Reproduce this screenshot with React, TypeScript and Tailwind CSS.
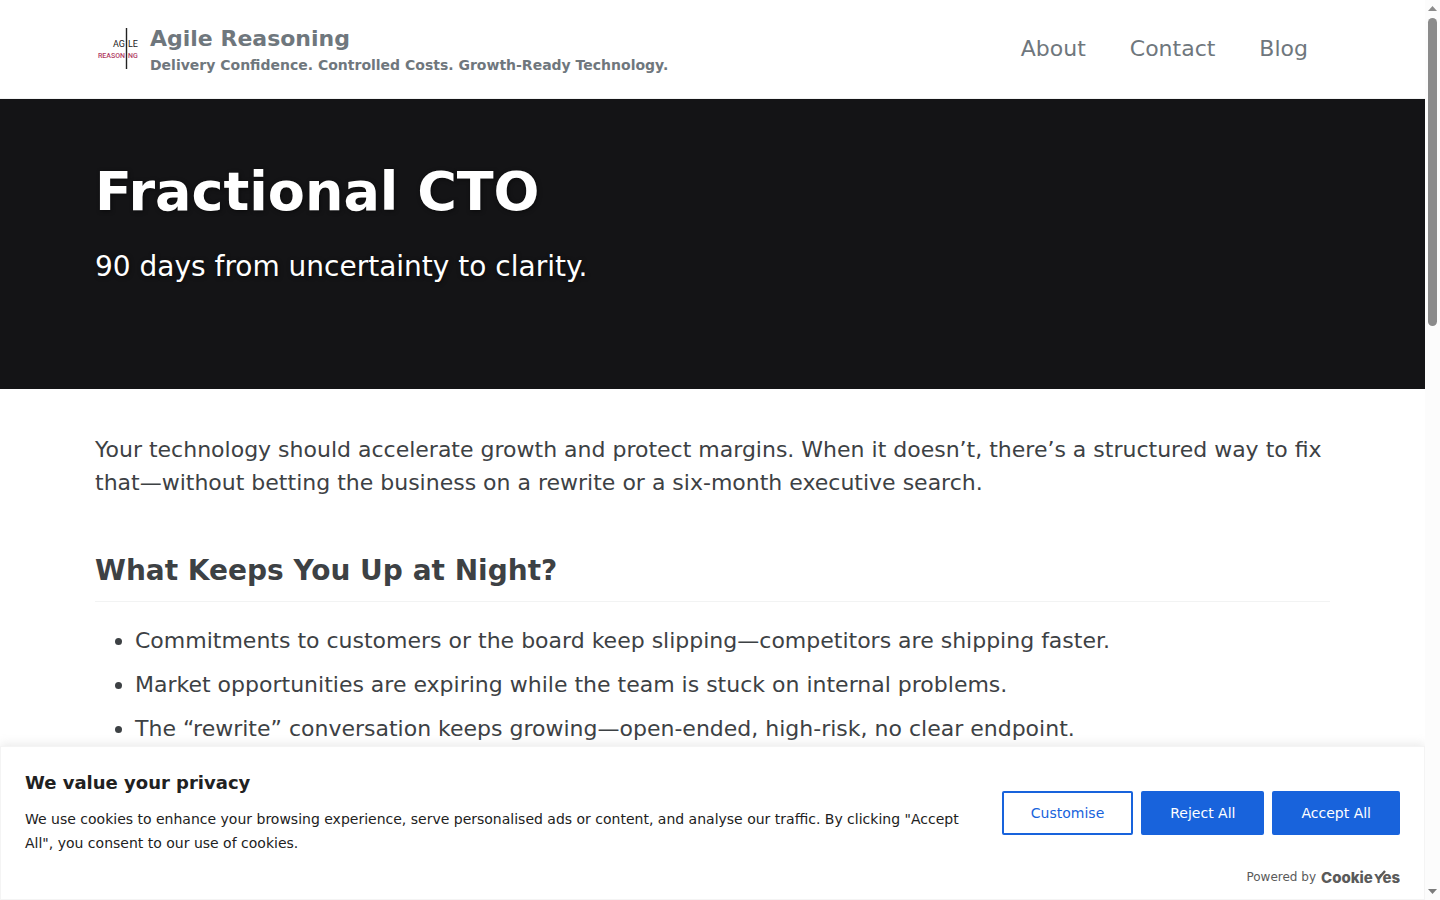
import React from 'react';

const navLinks = ['About', 'Contact', 'Blog'];

const concerns = [
  'Commitments to customers or the board keep slipping—competitors are shipping faster.',
  'Market opportunities are expiring while the team is stuck on internal problems.',
  'The “rewrite” conversation keeps growing—open-ended, high-risk, no clear endpoint.',
];

const Logo: React.FC = () => (
  <svg className="w-11 h-11 shrink-0" viewBox="0 0 44 44" role="img" aria-label="Agile Reasoning logo">
    <g fontFamily="Roboto, sans-serif">
      <text x="30" y="20" textAnchor="end" fontSize="9" fill="#222222">AG</text>
      <text x="33" y="20" fontSize="9" fill="#222222">LE</text>
      <text x="30" y="31" textAnchor="end" fontSize="7" fontWeight="500" fill="#b03a62">REASON</text>
      <text x="33" y="31" fontSize="7" fontWeight="500" fill="#b03a62">NG</text>
    </g>
    <path d="M31.500 1V42" stroke="#222222" strokeWidth="1.4" />
  </svg>
);

const CookieYesLogo: React.FC = () => (
  <svg className="w-20 h-5" viewBox="0 0 80 20" role="img" aria-label="CookieYes">
    <g fontFamily="Inter, sans-serif" fontWeight="800" fontSize="15" fill="#5a5a5a">
      <text x="1" y="16">Cookie</text>
      <text x="54" y="16" fontSize="12">Y</text>
      <text x="80" y="16" textAnchor="end">es</text>
    </g>
    <path d="M58 12L65 4" stroke="#5a5a5a" strokeWidth="2.4" fill="none" />
  </svg>
);

const Header: React.FC = () => (
  <header className="border-b border-[#f2f3f3] px-[95px] py-[22px] flex items-center justify-between text-[#6f777d]">
    <a href="#" className="flex items-center gap-[11px]">
      <Logo />
      <span className="font-bold">
        <span className="block text-[22px] leading-[33px]">Agile Reasoning</span>
        <span className="block text-sm leading-[21px]">
          Delivery Confidence. Controlled Costs. Growth-Ready Technology.
        </span>
      </span>
    </a>
    <nav className="flex gap-11 pr-[22px] text-[22px] leading-8">
      {navLinks.map((link) => (
        <a key={link} href="#">{link}</a>
      ))}
    </nav>
  </header>
);

const Hero: React.FC = () => (
  <section className="bg-[#141416] text-white px-[95px] pt-[61px] pb-[101px] [text-shadow:1px_1px_4px_rgba(0,0,0,0.5)]">
    <h1 className="text-[54px] leading-[64px] font-bold">Fractional CTO</h1>
    <p className="mt-[22px] text-[28px] leading-[42px]">90 days from uncertainty to clarity.</p>
  </section>
);

const CookieBanner: React.FC = () => (
  <section
    aria-label="We value your privacy"
    className="absolute inset-x-0 bottom-0 bg-white border border-[#f4f4f4] px-6 pt-6 text-[#212121] shadow-[0_-1px_10px_0_rgba(172,171,171,0.3)]"
  >
    <div className="flex items-center">
      <div className="flex-1">
        <h2 className="text-lg leading-6 font-bold mb-3">We value your privacy</h2>
        <p className="text-sm leading-6">
          We use cookies to enhance your browsing experience, serve personalised ads or content, and
          analyse our traffic. By clicking "Accept All", you consent to our use of cookies.
        </p>
      </div>
      <div className="flex gap-2 ml-8 shrink-0 text-sm">
        <button type="button" className="h-11 px-[27px] rounded-xs border-2 border-[#1863dc] text-[#1863dc]">
          Customise
        </button>
        <button type="button" className="h-11 px-[27px] rounded-xs border-2 border-[#1863dc] bg-[#1863dc] text-white">
          Reject All
        </button>
        <button type="button" className="h-11 px-[27px] rounded-xs border-2 border-[#1863dc] bg-[#1863dc] text-white">
          Accept All
        </button>
      </div>
    </div>
    <div className="flex items-center justify-end gap-1 py-3 text-xs leading-5 text-[#5a5a5a]">
      Powered by
      <a href="#"><CookieYesLogo /></a>
    </div>
  </section>
);

const ScrollTrack: React.FC = () => (
  <div aria-hidden="true" className="w-[15px] shrink-0 bg-[#fcfcfc] flex flex-col items-center justify-between py-[6px]">
    <div className="flex flex-col items-center gap-[7px] h-full">
      <svg className="w-[9px] h-[5px]" viewBox="0 0 9 5"><path d="M0 5L4.500 0L9 5Z" fill="#8b8b8b" /></svg>
      <div className="w-[9px] h-[308px] rounded-full bg-[#8b8b8b]" />
    </div>
    <svg className="w-[9px] h-[5px] shrink-0" viewBox="0 0 9 5"><path d="M0 0L4.500 5L9 0Z" fill="#7b7b7b" /></svg>
  </div>
);

export default function App() {
  return (
    <div className="flex h-screen overflow-hidden bg-white font-['DejaVu_Sans',sans-serif]">
      <div className="relative flex-1 min-w-0 overflow-hidden">
        <Header />
        <Hero />
        <main className="px-[95px] pt-11 text-[22px] leading-[33px] text-[#3d4144]">
          <p>
            Your technology should accelerate growth and protect margins. When it doesn’t, there’s a
            structured way to fix that—without betting the business on a rewrite or a six-month
            executive search.
          </p>
          <h2 className="mt-[55px] pb-[14px] border-b border-[#f2f3f3] text-[28px] leading-[33px] font-bold">
            What Keeps You Up at Night?
          </h2>
          <ul className="mt-[22px] pl-10 list-disc space-y-[11px]">
            {concerns.map((item) => (
              <li key={item}>{item}</li>
            ))}
          </ul>
        </main>
        <CookieBanner />
      </div>
      <ScrollTrack />
    </div>
  );
}
